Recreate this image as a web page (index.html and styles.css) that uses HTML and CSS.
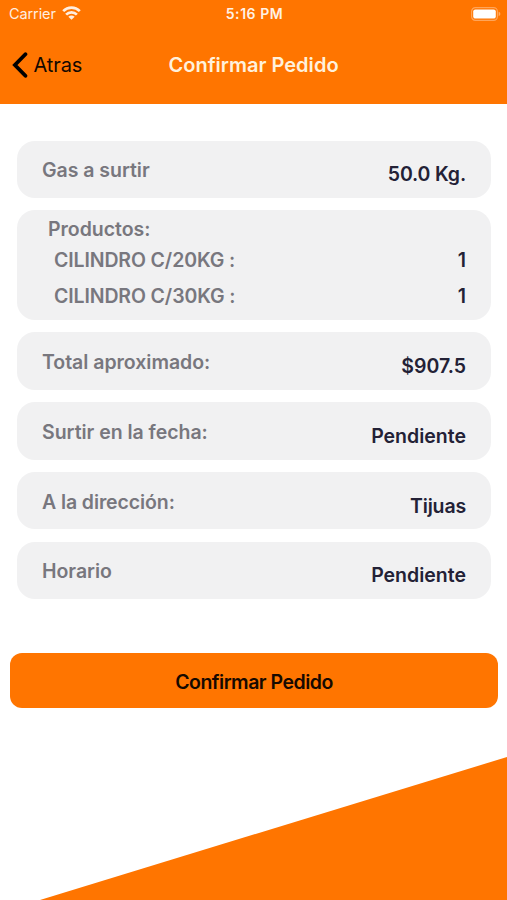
FILE: index.html
```html
<!DOCTYPE html>
<html lang="es">
<head>
<meta charset="utf-8">
<meta name="viewport" content="width=device-width, initial-scale=1">
<title>Confirmar Pedido</title>
<link rel="stylesheet" href="styles.css">
</head>
<body>
<div class="screen">
  <header class="header">
    <div class="status">
      <div class="carrier"><span class="carrier-name">Carrier</span>
        <svg class="wifi" width="19" height="14" viewBox="0 0 19 14" fill="none" stroke="#fff" stroke-width="2.7"><path d="M1.2 5.1C5.8.5 13.2.5 17.8 5.1M4.1 8.6C7.1 5.6 11.9 5.6 14.9 8.6"/><path d="M9.5 13.8 6.3 10.7Q9.5 8.3 12.7 10.7Z" fill="#fff" stroke="none"/></svg>
      </div>
      <span class="time">5:16 PM</span>
      <svg class="battery" width="30" height="14" viewBox="0 0 30 14"><rect x=".6" y=".6" width="25.8" height="12.8" rx="3.8" fill="none" stroke="#fff" stroke-opacity=".35" stroke-width="1.2"/><rect x="2.2" y="2.4" width="22.6" height="9.2" rx="2.2" fill="#fff"/><path d="M27.6 4.8Q29.4 5.4 29.4 7T27.6 9.2Z" fill="#fff" fill-opacity=".4"/></svg>
    </div>
    <nav class="nav">
      <a class="back"><svg width="16" height="26" viewBox="0 0 16 26" fill="none" stroke="#000" stroke-width="3.8" stroke-linecap="round" stroke-linejoin="miter"><path d="M13.4 2.2 2.9 13 13.4 23.8"/></svg><span class="back-label">Atras</span></a>
      <h1 class="title">Confirmar Pedido</h1>
    </nav>
  </header>
  <main class="content">
    <section class="card"><span class="label">Gas a surtir</span><span class="value kg">50.0 Kg.</span></section>
    <section class="card products">
      <h2 class="label products-title">Productos:</h2>
      <div class="product"><span class="label sku">CILINDRO C/20KG :</span><span class="value">1</span></div>
      <div class="product"><span class="label sku">CILINDRO C/30KG :</span><span class="value">1</span></div>
    </section>
    <section class="card"><span class="label">Total aproximado:</span><span class="value amount">$907.5</span></section>
    <section class="card"><span class="label">Surtir en la fecha:</span><span class="value">Pendiente</span></section>
    <section class="card"><span class="label address">A la dirección:</span><span class="value city">Tijuas</span></section>
    <section class="card"><span class="label">Horario</span><span class="value">Pendiente</span></section>
  </main>
  <button class="confirm">Confirmar Pedido</button>
  <svg class="slope" viewBox="0 0 507 143" preserveAspectRatio="none"><path d="M40 143 507 0V143Z" fill="#ff7500"/></svg>
</div>
</body>
</html>
```
FILE: styles.css
```css
* { box-sizing: border-box; }
body { margin: 0; background: #fff; font-family: Inter, "Liberation Sans", sans-serif; }
.screen { height: 900px; display: flex; flex-direction: column; overflow: hidden; }
.header { height: 103.5px; flex: none; background: #ff7500; }
.status { height: 27px; display: grid; grid-template-columns: 1fr auto 1fr; align-items: center; padding: 0 6px 0 9px; color: #fff; font-size: 14px; }
.carrier { display: flex; align-items: center; gap: 6px; opacity: .88; }
.carrier-name { font-size: 14.5px; letter-spacing: -.1px; }
.wifi { margin-top: -2px; }
.time { font-weight: 600; letter-spacing: .55px; margin-right: 1px; opacity: .9; }
.battery { justify-self: end; }
.nav { height: 76px; display: grid; grid-template-columns: 1fr auto 1fr; align-items: center; padding: 0 12px; }
.back { display: flex; align-items: center; gap: 5.5px; color: #130800; font-size: 20px; }
.back-label { letter-spacing: -.1px; }
.title { margin: 0; color: #fff1dc; font-size: 20px; font-weight: 600; letter-spacing: .02px; }
.content { display: flex; flex-direction: column; gap: 12.3px; padding: 37px 16px 0 17px; }
.card { height: 57.4px; display: flex; align-items: center; justify-content: space-between; padding: 2px 25px 0; border-radius: 18px; background: #f1f1f2; font-size: 19.5px; font-weight: 630; line-height: 24px; }
.label { color: #78777e; letter-spacing: -.03px; }
.sku { letter-spacing: -.12px; }
.address { letter-spacing: -.1px; }
.value { color: #232136; }
.kg, .city { letter-spacing: -.15px; }
.card > .value { padding-top: 8px; }
.products { height: 110px; display: block; padding-top: 7px; }
.products-title { margin: 0 0 0 6px; font-size: inherit; font-weight: inherit; }
.product { height: 36.7px; display: flex; align-items: center; justify-content: space-between; padding-left: 12px; }
.confirm { flex: none; height: 54.5px; margin: 54.5px 9px 0 10px; padding: 2px 0 0; border: 0; border-radius: 12px; background: #ff7500; color: #160900; font: 600 19.5px Inter, "Liberation Sans", sans-serif; letter-spacing: -.5px; }
.slope { display: block; width: 100%; height: 143px; margin-top: auto; flex: none; }
```
